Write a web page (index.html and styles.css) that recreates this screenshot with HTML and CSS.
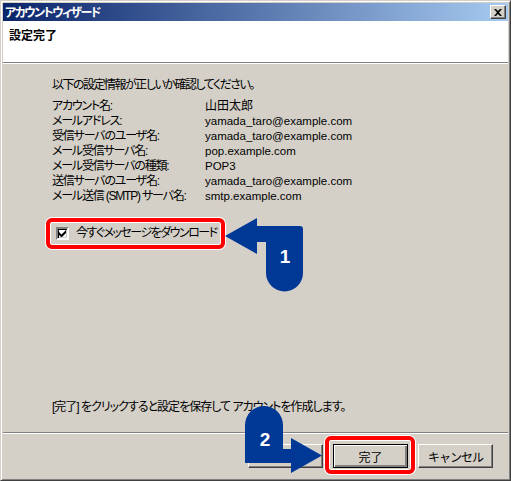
FILE: index.html
```html
<!DOCTYPE html>
<html lang="ja">
<head>
  <meta charset="UTF-8" />
  <title>アカウントウィザード</title>
  <link rel="stylesheet" href="styles.css">
</head>
<body>

  <div class="window">
    <div class="titlebar">
      <span class="title">アカウントウィザード</span>
      <button class="close" aria-label="閉じる">
        <svg width="8" height="7" viewBox="0 0 8 7"><path d="M0 0h2l2 2 2-2h2L5 3.5 8 7H6L4 5 2 7H0l3-3.5z" fill="#000"/></svg>
      </button>
    </div>

    <div class="header">
      <h1>設定完了</h1>
    </div>

    <div class="content">
      <p class="intro">以下の設定情報が正しいか確認してください。</p>

      <dl class="summary">
        <div class="row"><dt>アカウント名:</dt><dd class="jp">山田太郎</dd></div>
        <div class="row"><dt>メールアドレス:</dt><dd>yamada_taro@example.com</dd></div>
        <div class="row"><dt>受信サーバのユーザ名:</dt><dd>yamada_taro@example.com</dd></div>
        <div class="row"><dt>メール受信サーバ名:</dt><dd>pop.example.com</dd></div>
        <div class="row"><dt>メール受信サーバの種類:</dt><dd>POP3</dd></div>
        <div class="row"><dt>送信サーバのユーザ名:</dt><dd>yamada_taro@example.com</dd></div>
        <div class="row"><dt>メール送信 (SMTP) サーバ名:</dt><dd>smtp.example.com</dd></div>
      </dl>

      <div class="ring ring-check">
        <label class="check">
          <span class="box">
            <svg width="7" height="7" viewBox="0 0 7 7"><path d="M0 2v3l2 2h1l4-4V0L2.5 4.5z" fill="#000"/></svg>
          </span>
          今すぐメッセージをダウンロード
        </label>
      </div>

      <p class="note">[完了] をクリックすると設定を保存して アカウントを作成します。</p>
    </div>

    <div class="footer">
      <button class="btn" aria-label="戻る"></button>
      <div class="ring ring-btn">
        <button class="btn default">完了</button>
      </div>
      <button class="btn">キャンセル</button>
    </div>

    <svg class="arrow arrow-1" width="80" height="78" viewBox="224 216 80 78">
      <path d="M224 235 L256 217 L256 225 L299 225 Q302 225 302 228 L302 272 A18.5 18.5 0 0 1 265 272 L265 241 L256 241 L256 253 Z" fill="#003896"/>
      <text x="284" y="262" text-anchor="middle">1</text>
    </svg>

    <svg class="arrow arrow-2" width="80" height="70" viewBox="243 404 80 70">
      <path d="M244 424 A19 19 0 0 1 282 424 L282 448 L290 448 L290 437 L321 454.5 L290 472 L290 462 L244 462 Z" fill="#003896"/>
      <text x="264" y="445" text-anchor="middle">2</text>
    </svg>
  </div>

</body>
</html>
```

FILE: styles.css
```css
:root {
  --face: #d4d0c8;
  --shadow: #808080;
  --dark: #404040;
  --hilite: #fff;
  --mark: #f00;
  --arrow: #003896;
}

body {
  margin: 0;
  font-family: "Liberation Sans", "Noto Sans CJK JP", sans-serif;
  font-size: 12px;
  color: #000;
  background: var(--face);
}

.window {
  position: relative;
  width: 511px;
  height: 481px;
  box-sizing: border-box;
  display: flex;
  flex-direction: column;
  padding: 2px;
  background: var(--face);
  border: 1px solid;
  border-color: var(--face) var(--dark) var(--dark) var(--face);
  box-shadow: inset 1px 1px var(--hilite), inset -1px -1px var(--shadow);
}

/* title bar */
.titlebar {
  height: 18px;
  display: flex;
  align-items: center;
  justify-content: space-between;
  padding: 0 2px;
  background: linear-gradient(to right, #0a246a, #a6caf0);
}

.title {
  color: #fff;
  font-weight: bold;
  font-family: "Noto Sans CJK JP", sans-serif;
  font-size: 12px;
  line-height: 18px;
  letter-spacing: -1.5px;
  font-feature-settings: "palt";
}

.close {
  width: 16px;
  height: 14px;
  padding: 0;
  display: flex;
  align-items: center;
  justify-content: center;
  background: var(--face);
  border: 1px solid;
  border-color: var(--hilite) var(--dark) var(--dark) var(--hilite);
  box-shadow: inset -1px -1px var(--shadow);
}

/* header */
.header {
  height: 42px;
  box-sizing: border-box;
  padding: 6px 6px 0;
  background: #fff;
  border-bottom: 1px solid var(--shadow);
  box-shadow: 0 1px var(--hilite);
}

.header h1 {
  margin: 0;
  font-size: 12px;
  line-height: 15px;
  font-weight: bold;
  font-family: "Noto Sans CJK JP", sans-serif;
}

/* body */
.content {
  flex: 1;
  display: flex;
  flex-direction: column;
  align-items: flex-start;
  padding: 14px 0 17px 49px;
  margin-top: 1px;
}

.intro,
.note,
.row dt,
.check,
.jp {
  letter-spacing: -1.5px;
  font-feature-settings: "palt";
}

.row dt {
  letter-spacing: -1.2px;
}

.note {
  letter-spacing: -1px;
}

.intro,
.note {
  margin: 0;
  line-height: 15px;
}

.note {
  margin-top: auto;
}

.summary {
  margin: 6px 0 0;
}

.row {
  display: flex;
  line-height: 15px;
  white-space: nowrap;
}

.row dt {
  width: 153px;
  flex-shrink: 0;
}

.row dd {
  margin: 0;
  font-size: 11.5px;
}

.row dd.jp {
  font-size: 12px;
  letter-spacing: 0;
}

/* red marker */
.ring {
  border: 4px solid var(--mark);
  border-radius: 6px;
  box-shadow: 0 0 0 1px var(--hilite), inset 0 0 0 1px var(--hilite);
}

.ring-check {
  margin: 14px 0 0 -6px;
  padding: 4px 4px 4px 6px;
}

.check {
  display: flex;
  align-items: center;
  gap: 7px;
  line-height: 15px;
}

.box {
  width: 9px;
  height: 9px;
  display: flex;
  align-items: center;
  justify-content: center;
  background: #fff;
  border: 2px solid;
  border-color: var(--shadow) var(--hilite) var(--hilite) var(--shadow);
  box-shadow: inset 1px 1px #000, inset -1px -1px var(--face);
}

/* buttons */
.footer {
  height: 46px;
  box-sizing: border-box;
  display: flex;
  justify-content: flex-end;
  align-items: flex-start;
  gap: 10px;
  padding: 11px 15px 0 0;
  border-top: 1px solid var(--shadow);
  box-shadow: inset 0 1px var(--hilite);
}

.btn {
  width: 75px;
  height: 24px;
  padding: 0;
  font-family: "Noto Sans CJK JP", sans-serif;
  font-size: 12px;
  letter-spacing: -1px;
  background: var(--face);
  border: 1px solid;
  border-color: var(--hilite) var(--dark) var(--dark) var(--hilite);
  box-shadow: inset -1px -1px var(--shadow);
}

.btn.default {
  letter-spacing: 0;
  border: 1px solid #000;
  box-shadow: inset 1px 1px var(--hilite), inset -2px -2px var(--shadow);
}

.ring-btn {
  display: flex;
  margin: -8px -7px 0 -8px;
  padding: 4px 3px 2px 4px;
}

/* overlay arrows */
.arrow {
  position: absolute;
  overflow: visible;
}

.arrow text {
  fill: #fff;
  font-family: "Liberation Sans", sans-serif;
  font-weight: bold;
  font-size: 19px;
}

.arrow-1 {
  left: 224px;
  top: 216px;
}

.arrow-2 {
  left: 243px;
  top: 404px;
}
```
